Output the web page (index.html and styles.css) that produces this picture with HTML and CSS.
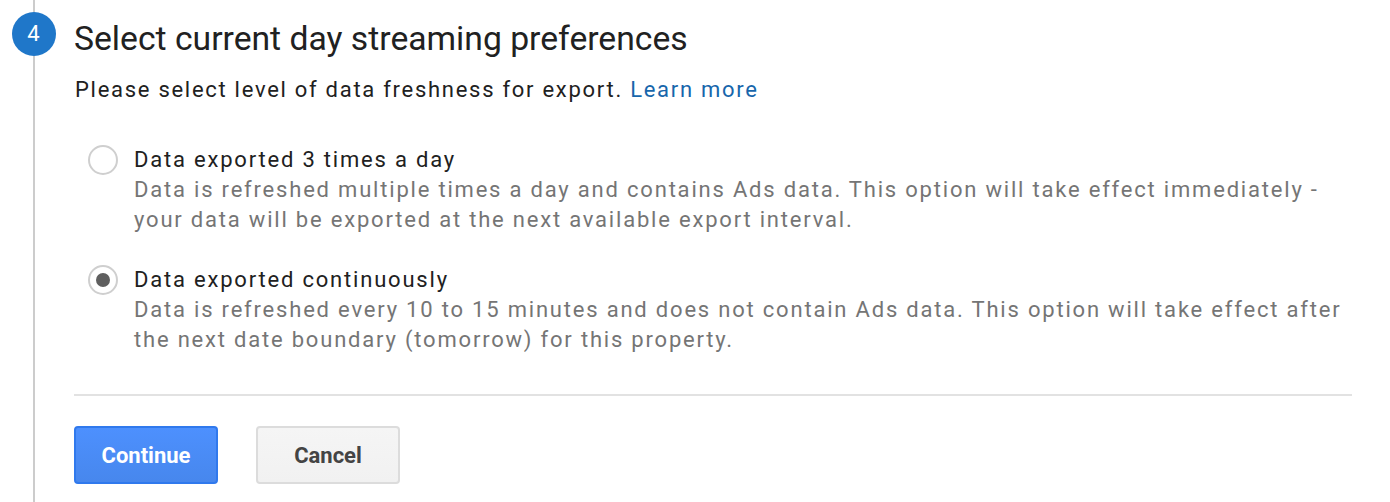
FILE: index.html
```html
<!DOCTYPE html>
<html lang="en">
<head>
<meta charset="utf-8">
<title>Streaming preferences</title>
<link rel="stylesheet" href="styles.css">
</head>
<body>
<div class="step">
  <div class="rail">
    <div class="rail-line rail-top"></div>
    <div class="badge">4</div>
    <div class="rail-line rail-bottom"></div>
  </div>
  <div class="content">
    <h2 class="title">Select current day streaming preferences</h2>
    <p class="intro">Please select level of data freshness for export. <a class="link" href="#">Learn more</a></p>
    <div class="options">
      <label class="option">
        <span class="radio"></span>
        <span class="option-text">
          <span class="option-label">Data exported 3 times a day</span>
          <span class="option-desc">Data is refreshed multiple times a day and contains Ads data. This option will take effect immediately - your data will be exported at the next available export interval.</span>
        </span>
      </label>
      <label class="option">
        <span class="radio radio-checked"></span>
        <span class="option-text">
          <span class="option-label">Data exported continuously</span>
          <span class="option-desc">Data is refreshed every 10 to 15 minutes and does not contain Ads data. This option will take effect after the next date boundary (tomorrow) for this property.</span>
        </span>
      </label>
    </div>
    <div class="divider"></div>
    <div class="actions">
      <button class="btn btn-primary">Continue</button>
      <button class="btn btn-secondary">Cancel</button>
    </div>
  </div>
</div>
</body>
</html>
```
FILE: styles.css
```css
html, body {
  margin: 0;
  padding: 0;
  background: #ffffff;
}

body {
  font-family: Roboto, "Liberation Sans", Arial, sans-serif;
  color: #212121;
  width: 1390px;
  height: 502px;
  overflow: hidden;
}

.step {
  display: flex;
  height: 502px;
}

.rail {
  width: 68px;
  flex: 0 0 68px;
  display: flex;
  flex-direction: column;
  align-items: center;
}

.rail-line {
  width: 2px;
  background: #cccccc;
  margin-left: -1px;
}

.rail-top {
  height: 12px;
}

.rail-bottom {
  flex: 1;
}

.badge {
  width: 44px;
  height: 44px;
  border-radius: 50%;
  background: #1f77c9;
  color: #ffffff;
  font-size: 22px;
  line-height: 44px;
  text-align: center;
  margin-left: -1px;
}

.content {
  flex: 1;
  padding: 19px 38px 0 6px;
}

.title {
  margin: 0;
  font-size: 33.7px;
  font-weight: 400;
  line-height: 40px;
  color: #212121;
}

.intro {
  margin: 16px 0 0 1px;
  font-size: 22px;
  line-height: 30px;
  letter-spacing: 1.72px;
  color: #212121;
}

.link {
  color: #1766ab;
  text-decoration: none;
}

.options {
  margin-top: 40px;
  display: flex;
  flex-direction: column;
  gap: 30px;
  padding-left: 14px;
}

.option {
  display: flex;
  gap: 16px;
  align-items: flex-start;
}

.radio {
  flex: 0 0 30px;
  width: 30px;
  height: 30px;
  box-sizing: border-box;
  border: 2px solid #cfcfcf;
  border-radius: 50%;
  display: flex;
  align-items: center;
  justify-content: center;
}

.radio-checked::after {
  content: "";
  width: 14px;
  height: 14px;
  border-radius: 50%;
  background: #5f5f5f;
}

.option-text {
  display: flex;
  flex-direction: column;
  font-size: 22px;
  line-height: 30px;
  letter-spacing: 1.8px;
}

.option-label {
  color: #212121;
}

.option-desc {
  color: #757575;
}

.divider {
  margin-top: 39px;
  height: 2px;
  background: #e2e2e2;
}

.actions {
  display: flex;
  gap: 38px;
  margin-top: 30px;
}

.btn {
  width: 144px;
  height: 58px;
  box-sizing: border-box;
  border-radius: 4px;
  font-family: Roboto, "Liberation Sans", Arial, sans-serif;
  font-size: 22px;
  font-weight: 700;
  padding: 0;
  letter-spacing: 0;
}

.btn-primary {
  background: linear-gradient(#4d90fe, #4787ed);
  border: 2px solid #3079ed;
  color: #ffffff;
}

.btn-secondary {
  background: linear-gradient(#f5f5f5, #f1f1f1);
  border: 2px solid #dcdcdc;
  color: #444444;
}
```
